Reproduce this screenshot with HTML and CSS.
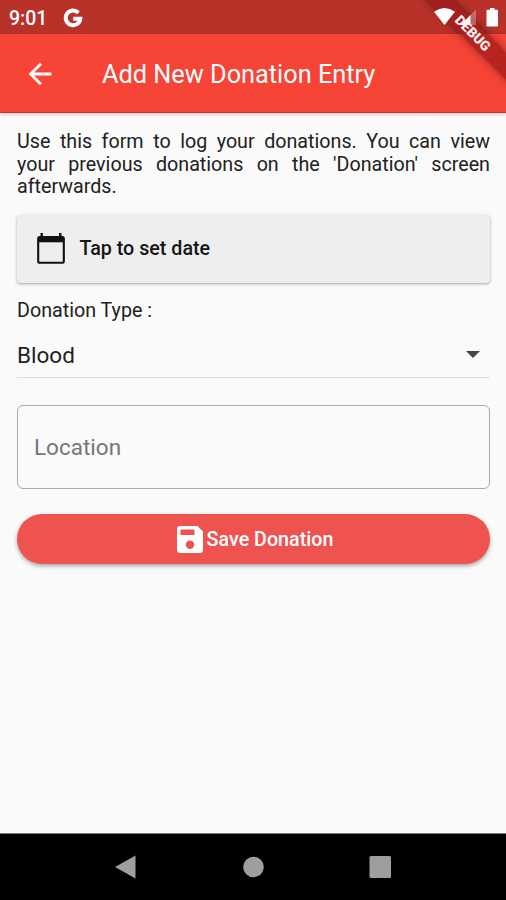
FILE: index.html
```html
<!DOCTYPE html>
<html lang="en">
<head>
  <meta charset="UTF-8">
  <meta name="viewport" content="width=device-width, initial-scale=1.0">
  <title>Add New Donation Entry</title>
  <link rel="stylesheet" href="styles.css">
</head>
<body>

  <div class="status-bar">
    <span class="time">9:01</span>
    <svg class="google" viewBox="0 0 20 20" width="20" height="20">
      <path d="M15.400 4.900A7.300 7.300 0 1 0 17.300 10.700H10.200" fill="none" stroke="#fff" stroke-width="4"/>
    </svg>
    <svg class="signals" viewBox="0 0 66 20" width="66" height="20">
      <path d="M0 3.700Q10.500-3.500 21 3.700L10.500 17Z" fill="#fff"/>
      <path d="M42 1.500V17H26.500Z" fill="#fff" fill-opacity=".3"/>
      <path d="M36.500 7V17H26.500Z" fill="#fff"/>
      <path d="M53.500 1.700H56V0H60.500V1.700H63Q64 1.700 64 2.700V17.500Q64 18.500 63 18.500H53.500Q52.500 18.500 52.500 17.500V2.700Q52.500 1.700 53.500 1.700Z" fill="#fff"/>
    </svg>
  </div>

  <header>
    <svg class="back" viewBox="0 0 24 24" width="34" height="34">
      <path d="M20 11H7.830l5.590-5.590L12 4l-8 8 8 8 1.410-1.410L7.830 13H20v-2z" fill="#fff"/>
    </svg>
    <h1>Add New Donation Entry</h1>
  </header>

  <div class="ribbon"></div>
  <div class="debug">DEBUG</div>

  <main>
    <p class="intro">Use this form to log your donations. You can view your previous donations on the 'Donation' screen afterwards.</p>

    <button class="date-button">
      <svg viewBox="0 0 28 32" width="28" height="32">
        <path d="M4.700 0V5M23.300 0V5" stroke="#111" stroke-width="2.400"/>
        <rect x="1.200" y="4" width="25.600" height="25.800" rx="1.500" fill="none" stroke="#111" stroke-width="2.100"/>
        <path d="M1 4H27V9.300H1Z" fill="#111"/>
      </svg>
      Tap to set date
    </button>

    <div class="type-label">Donation Type :</div>
    <div class="dropdown">
      <span>Blood</span>
      <svg viewBox="0 0 14 7" width="14" height="7">
        <path d="M0 0H14L7 7Z" fill="#444"/>
      </svg>
    </div>

    <input class="location" type="text" placeholder="Location">

    <button class="save-button">
      <svg viewBox="0 0 26 27" width="26" height="27">
        <path fill-rule="evenodd" d="M3 0H20.500L26 5.500V24A3 3 0 0 1 23 27H3A3 3 0 0 1 0 24V3A3 3 0 0 1 3 0ZM3.500 3.500V9H17.500V3.500ZM13 14.500A4.200 4.200 0 1 0 13 22.900A4.200 4.200 0 1 0 13 14.500Z" fill="#fff"/>
      </svg>
      Save Donation
    </button>
  </main>

  <nav>
    <svg viewBox="0 0 22 24" width="22" height="24"><path d="M0 12L20.500 .5V23.500Z" fill="#9e9e9e"/></svg>
    <svg viewBox="0 0 22 22" width="22" height="22"><circle cx="11.500" cy="11" r="10.300" fill="#9e9e9e"/></svg>
    <svg viewBox="0 0 22 22" width="22" height="22"><rect x=".5" width="21.500" height="22" rx="1.500" fill="#9e9e9e"/></svg>
  </nav>

</body>
</html>
```

FILE: styles.css
```css
* {
  box-sizing: border-box;
}

body {
  font-family: Roboto, "Liberation Sans", sans-serif;
  background-color: #fafafa;
  color: #212121;
  margin: 0;
  height: 900px;
  display: flex;
  flex-direction: column;
  position: relative;
  overflow: hidden;
}

.status-bar {
  height: 34px;
  background-color: #b9322a;
  color: white;
  display: flex;
  align-items: center;
  padding: 2px 6px 0 9px;
}

.time {
  font-size: 19.5px;
  font-weight: 500;
  width: 54px;
}

.signals {
  margin-left: auto;
  position: relative;
  z-index: 2;
}

header {
  height: 79px;
  background-color: #f64436;
  border-bottom: 1px solid #dd2a22;
  box-shadow: 0 1px 4px rgba(0,0,0,0.22);
  color: white;
  display: flex;
  align-items: center;
  padding-left: 23px;
}

.back {
  margin-top: 1px;
}

h1 {
  font-size: 25.3px;
  font-weight: 400;
  margin: 2px 0 0 45px;
}

/* corner ribbon, the status icons stay above it */
.ribbon,
.debug {
  position: absolute;
  top: 24px;
  left: 413px;
  width: 120px;
  height: 18px;
  transform: rotate(45deg);
}

.ribbon {
  z-index: 1;
  background-color: rgba(160,24,26,0.75);
  box-shadow: 0 0 8px rgba(0,0,0,0.5);
}

.debug {
  z-index: 3;
  line-height: 18px;
  text-align: center;
  font-size: 13.7px;
  font-weight: 900;
  color: #fff0ee;
}

main {
  flex: 1;
  padding: 18px 16px 0 17px;
}

.intro {
  margin: 0;
  font-size: 19.7px;
  line-height: 22.5px;
  text-align: justify;
}

button {
  display: flex;
  align-items: center;
  width: 100%;
  border: none;
  font-family: inherit;
  font-size: 19.7px;
  font-weight: 500;
}

.date-button {
  height: 68px;
  margin-top: 16px;
  padding: 0 20px;
  gap: 14.5px;
  background-color: #eee;
  color: #151515;
  border-radius: 4px;
  box-shadow: 0 1px 3px rgba(0,0,0,0.35);
}

.type-label {
  margin-top: 16px;
  font-size: 19.7px;
  line-height: 23px;
}

.dropdown {
  display: flex;
  align-items: center;
  justify-content: space-between;
  height: 56px;
  padding: 11px 10px 0 0;
  border-bottom: 1px solid #ddd;
  font-size: 22.5px;
}

.location {
  display: block;
  width: 100%;
  height: 84px;
  margin-top: 27px;
  padding: 0 16px;
  background: none;
  border: 1.5px solid #aaa;
  border-radius: 6px;
  font-family: inherit;
  font-size: 22.5px;
}

.location::placeholder {
  color: #777;
}

.save-button {
  justify-content: center;
  height: 50px;
  margin-top: 25px;
  padding: 2px 4px 0 7px;
  gap: 4px;
  background-color: #ef5350;
  color: white;
  border-radius: 25px;
  box-shadow: 0 2px 4px rgba(0,0,0,0.35);
}

nav {
  height: 67px;
  background-color: #000;
  border-top: 1px solid #777;
  display: flex;
  align-items: center;
  justify-content: space-between;
  padding: 0 115px 0 115px;
}
```
